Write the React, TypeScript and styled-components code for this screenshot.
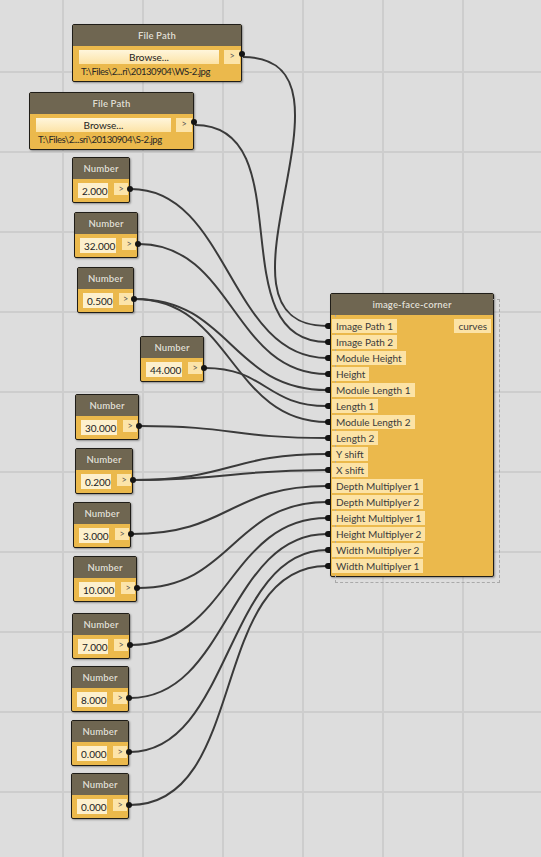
import React from "react";
import styled, { createGlobalStyle } from "styled-components";

const Global = createGlobalStyle`
  html, body { margin: 0; padding: 0; background: #dddddd; }
  body { font-family: Lato, "Noto Sans", sans-serif; }
`;

const Canvas = styled.div`
  position: relative;
  width: 541px;
  height: 857px;
  overflow: hidden;
  background-color: #dddddd;
  background-image:
    linear-gradient(to right, #cdcdcd 2px, transparent 2px),
    linear-gradient(to bottom, #cdcdcd 2px, transparent 2px);
  background-size: 80px 80px;
  background-position: 62px 71px;
`;

const WireLayer = styled.svg`
  position: absolute;
  left: 0;
  top: 0;
  width: 541px;
  height: 857px;
  z-index: 1;
`;

const NodeBox = styled.div<{ $x: number; $y: number; $w: number; $selected?: boolean }>`
  position: absolute;
  left: ${(p) => p.$x}px;
  top: ${(p) => p.$y}px;
  width: ${(p) => p.$w}px;
  box-sizing: border-box;
  z-index: 2;
  border: 1px solid #1f1d18;
  border-radius: 2px;
  background: #ebb94c;
  box-shadow: 1px 1px 2px rgba(0, 0, 0, 0.35);
  ${(p) =>
    p.$selected &&
    `
    &::before {
      content: "";
      position: absolute;
      left: 4px;
      top: 5px;
      right: -7px;
      bottom: -7px;
      border: 1.5px dashed #a9a9a9;
      z-index: -1;
      pointer-events: none;
    }
  `}
`;

const NodeHeader = styled.div`
  height: 21px;
  background: #6f6651;
  color: #dedace;
  font-weight: 700;
  font-size: 9.5px;
  display: flex;
  align-items: center;
  justify-content: center;
  text-shadow: 0 0 1px rgba(0, 0, 0, 0.25);
  letter-spacing: 0.1px;
`;

const NumberBody = styled.div`
  position: relative;
  display: flex;
  align-items: flex-start;
  gap: 6px;
  padding: 4px 1px 4px 5px;
`;

const ValueField = styled.div`
  flex: 1;
  height: 15px;
  background: #fdf0cd;
  color: #222;
  font-size: 10px;
  display: flex;
  align-items: center;
  padding-left: 4px;
`;

const ArrowButton = styled.div<{ $w: number; $h: number }>`
  width: ${(p) => p.$w}px;
  height: ${(p) => p.$h}px;
  flex: none;
  background: #fce4a9;
  color: #555;
  font-size: 9px;
  display: flex;
  justify-content: center;
  line-height: 11px;
  box-sizing: border-box;
`;

const OutPort = styled.div<{ $top: number }>`
  position: absolute;
  right: -4px;
  top: ${(p) => p.$top}px;
  width: 6px;
  height: 6px;
  border-radius: 50%;
  background: #141414;
`;

const FileBody = styled.div`
  position: relative;
  padding: 4px 1px 3px 6px;
  display: flex;
  flex-direction: column;
  gap: 1px;
`;

const BrowseRow = styled.div`
  display: flex;
  gap: 5px;
  align-items: flex-start;
`;

const BrowseButton = styled.div`
  flex: 1;
  height: 14px;
  background: linear-gradient(to bottom, #fff6dc, #fce3a6);
  color: #222;
  font-size: 10px;
  display: flex;
  align-items: center;
  justify-content: center;
`;

const PathText = styled.div`
  font-size: 9.5px;
  letter-spacing: -0.45px;
  color: #262626;
  height: 13px;
  line-height: 13px;
  padding-left: 2px;
  white-space: nowrap;
`;

const PortList = styled.div`
  display: flex;
  justify-content: space-between;
  padding: 4px 2px 3px 1px;
`;

const InputColumn = styled.div`
  display: flex;
  flex-direction: column;
  gap: 2px;
`;

const InputRow = styled.div`
  position: relative;
  display: flex;
  height: 14px;
`;

const PortLabel = styled.div`
  height: 14px;
  background: #fce3a6;
  color: #3a3a3a;
  font-size: 10px;
  display: flex;
  align-items: center;
  padding: 0 4px;
  white-space: nowrap;
`;

const InPort = styled.div`
  position: absolute;
  left: -7px;
  top: 4px;
  width: 5px;
  height: 6px;
  border-radius: 3px 0 0 3px;
  background: #141414;
`;

type NumberNodeDef = { v: string; x: number; y: number; w: number; targets: number[] };

const numberNodes: NumberNodeDef[] = [
  { v: "2.000", x: 72, y: 157, w: 58, targets: [2] },
  { v: "32.000", x: 74, y: 212, w: 64, targets: [3] },
  { v: "0.500", x: 77, y: 267, w: 57, targets: [4, 6] },
  { v: "44.000", x: 140, y: 336, w: 64, targets: [5] },
  { v: "30.000", x: 75, y: 394, w: 64, targets: [7] },
  { v: "0.200", x: 75, y: 448, w: 58, targets: [8, 9] },
  { v: "3.000", x: 73, y: 502, w: 58, targets: [10] },
  { v: "10.000", x: 73, y: 556, w: 64, targets: [11] },
  { v: "7.000", x: 72, y: 613, w: 58, targets: [12] },
  { v: "8.000", x: 71, y: 666, w: 58, targets: [13] },
  { v: "0.000", x: 71, y: 720, w: 58, targets: [14] },
  { v: "0.000", x: 71, y: 773, w: 58, targets: [15] },
];

type FileNodeDef = { path: string; x: number; y: number; w: number; targets: number[] };

const fileNodes: FileNodeDef[] = [
  { path: "T:\\Files\\2...ri\\20130904\\WS-2.jpg", x: 72, y: 24, w: 170, targets: [0] },
  { path: "T:\\Files\\2...sri\\20130904\\S-2.jpg", x: 29, y: 92, w: 165, targets: [1] },
];

const inputs = [
  "Image Path 1",
  "Image Path 2",
  "Module Height",
  "Height",
  "Module Length 1",
  "Length 1",
  "Module Length 2",
  "Length 2",
  "Y shift",
  "X shift",
  "Depth Multiplyer 1",
  "Depth Multiplyer 2",
  "Height Multiplyer 1",
  "Height Multiplyer 2",
  "Width Multiplyer 2",
  "Width Multiplyer 1",
];

const MAIN = { x: 330, y: 293, w: 164 };
const inputPoint = (i: number) => ({ x: MAIN.x - 3, y: MAIN.y + 1 + 21 + 4 + 7 + i * 16 });

function wirePath(x1: number, y1: number, x2: number, y2: number) {
  const o = 0.5 * Math.max(Math.abs(x2 - x1), Math.abs(y2 - y1));
  return `M ${x1} ${y1} C ${x1 + o} ${y1}, ${x2 - o} ${y2}, ${x2} ${y2}`;
}

export default function App() {
  const wires: string[] = [];
  fileNodes.forEach((n) => {
    const sx = n.x + n.w + 1;
    const sy = n.y + 33;
    n.targets.forEach((t) => {
      const p = inputPoint(t);
      wires.push(wirePath(sx, sy, p.x, p.y));
    });
  });
  numberNodes.forEach((n) => {
    const sx = n.x + n.w + 1;
    const sy = n.y + 32;
    n.targets.forEach((t) => {
      const p = inputPoint(t);
      wires.push(wirePath(sx, sy, p.x, p.y));
    });
  });

  return (
    <>
      <Global />
      <Canvas>
        <WireLayer viewBox="0 0 541 857">
          {wires.map((d, i) => (
            <path key={i} d={d} fill="none" stroke="#3a3a3a" strokeWidth={2} />
          ))}
        </WireLayer>

        {fileNodes.map((n, i) => (
          <NodeBox key={"f" + i} $x={n.x} $y={n.y} $w={n.w}>
            <NodeHeader>File Path</NodeHeader>
            <FileBody>
              <BrowseRow>
                <BrowseButton>Browse...</BrowseButton>
                <ArrowButton $w={16} $h={14}>&gt;</ArrowButton>
              </BrowseRow>
              <PathText>{n.path}</PathText>
              <OutPort $top={5} />
            </FileBody>
          </NodeBox>
        ))}

        {numberNodes.map((n, i) => (
          <NodeBox key={"n" + i} $x={n.x} $y={n.y} $w={n.w}>
            <NodeHeader>Number</NodeHeader>
            <NumberBody>
              <ValueField>{n.v}</ValueField>
              <ArrowButton $w={14} $h={12}>&gt;</ArrowButton>
              <OutPort $top={7} />
            </NumberBody>
          </NodeBox>
        ))}

        <NodeBox $x={MAIN.x} $y={MAIN.y} $w={MAIN.w} $selected>
          <NodeHeader>image-face-corner</NodeHeader>
          <PortList>
            <InputColumn>
              {inputs.map((label) => (
                <InputRow key={label}>
                  <InPort />
                  <PortLabel>{label}</PortLabel>
                </InputRow>
              ))}
            </InputColumn>
            <InputColumn>
              <InputRow>
                <PortLabel>curves</PortLabel>
              </InputRow>
            </InputColumn>
          </PortList>
        </NodeBox>
      </Canvas>
    </>
  );
}
